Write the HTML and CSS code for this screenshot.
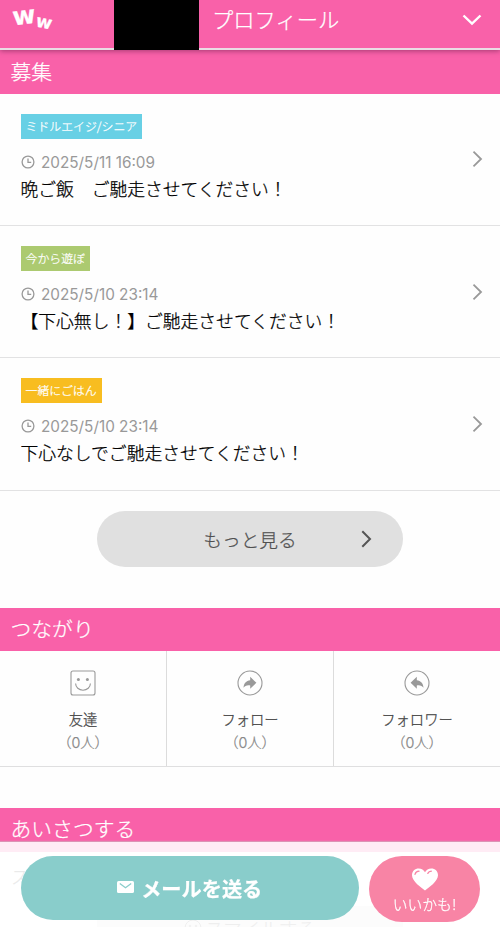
FILE: index.html
```html
<!DOCTYPE html>
<html lang="ja">
<head>
<meta charset="utf-8">
<title>プロフィール</title>
<link rel="stylesheet" href="styles.css">
</head>
<body>
<header class="topbar">
  <div class="logo"><span class="logo-big">w</span><span class="logo-small">w</span></div>
  <div class="name-mask"></div>
  <h1 class="topbar-title">プロフィール</h1>
  <svg class="topbar-toggle" width="20" height="12" viewBox="0 0 20 12"><path d="M1.5 1.5 10 9.6 18.5 1.5" fill="none" stroke="#fff" stroke-width="2.4"/></svg>
</header>
<main>
  <h2 class="section-title first">募集</h2>
  <ul class="posts">
    <li class="post">
      <div class="post-body">
        <span class="tag blue">ミドルエイジ/シニア</span>
        <div class="date"><svg width="14" height="14" viewBox="0 0 14 14"><circle cx="7" cy="7" r="5.9"/><path d="M7 3.6V7.4H10.2"/></svg><time>2025/5/11 16:09</time></div>
        <p class="post-title">晩ご飯　ご馳走させてください！</p>
      </div>
      <svg class="chevron" width="11" height="18" viewBox="0 0 11 18"><path d="M1.5 1.7 9 9 1.5 16.3"/></svg>
    </li>
    <li class="post">
      <div class="post-body">
        <span class="tag green">今から遊ぼ</span>
        <div class="date"><svg width="14" height="14" viewBox="0 0 14 14"><circle cx="7" cy="7" r="5.9"/><path d="M7 3.6V7.4H10.2"/></svg><time>2025/5/10 23:14</time></div>
        <p class="post-title">【下心無し！】ご馳走させてください！</p>
      </div>
      <svg class="chevron" width="11" height="18" viewBox="0 0 11 18"><path d="M1.5 1.7 9 9 1.5 16.3"/></svg>
    </li>
    <li class="post">
      <div class="post-body">
        <span class="tag yellow">一緒にごはん</span>
        <div class="date"><svg width="14" height="14" viewBox="0 0 14 14"><circle cx="7" cy="7" r="5.9"/><path d="M7 3.6V7.4H10.2"/></svg><time>2025/5/10 23:14</time></div>
        <p class="post-title">下心なしでご馳走させてください！</p>
      </div>
      <svg class="chevron" width="11" height="18" viewBox="0 0 11 18"><path d="M1.5 1.7 9 9 1.5 16.3"/></svg>
    </li>
  </ul>
  <a class="more"><span>もっと見る</span><svg class="more-arrow" width="11" height="18" viewBox="0 0 11 18"><path d="M1.3 1.3 9 9 1.3 16.7"/></svg></a>

  <h2 class="section-title">つながり</h2>
  <div class="links">
    <div class="link">
      <svg width="26" height="26" viewBox="0 0 26 26"><rect x="1" y="1" width="24" height="24" rx="2" class="line"/><circle cx="8.4" cy="9.6" r="1.5" class="solid"/><circle cx="17.4" cy="9.6" r="1.5" class="solid"/><path d="M5.6 13.6a7.4 6.6 0 0 0 14.8 0" class="line"/></svg>
      <span class="link-name">友達</span><span class="link-count">（0人）</span>
    </div>
    <div class="link">
      <svg width="26" height="26" viewBox="0 0 26 26"><circle cx="13" cy="13" r="12" class="line"/><path class="solid" d="M13.2 6.8 19.4 12.8 13.2 18.8V15.4C9.8 15 7.8 15.8 6.5 17.8 6.8 13.4 9.2 10.7 13.2 10.3Z"/></svg>
      <span class="link-name">フォロー</span><span class="link-count">（0人）</span>
    </div>
    <div class="link">
      <svg width="26" height="26" viewBox="0 0 26 26"><circle cx="13" cy="13" r="12" class="line"/><path class="solid" d="M12.8 6.8 6.6 12.8 12.8 18.8V15.4C16.2 15 18.2 15.8 19.5 17.8 19.2 13.4 16.8 10.7 12.8 10.3Z"/></svg>
      <span class="link-name">フォロワー</span><span class="link-count">（0人）</span>
    </div>
  </div>

  <h2 class="section-title greet">あいさつする</h2>
  <p class="greet-lead">ス</p>
  <div class="greet-button"><svg width="18" height="18" viewBox="0 0 18 18"><circle cx="9" cy="9" r="8"/><circle cx="6" cy="7" r=".8"/><circle cx="12" cy="7" r=".8"/></svg><span>スマイルする</span></div>
</main>
<footer class="actions">
  <a class="mail">
    <svg width="17" height="12" viewBox="0 0 17 12"><rect width="17" height="12" rx="1.6" fill="#fff"/><path d="M2.8 2.6 8.5 6.8 14.2 2.6" fill="none" stroke="#89cdcb" stroke-width="1.3"/></svg>
    <span>メールを送る</span>
  </a>
  <a class="like">
    <svg width="26" height="23" viewBox="0 0 26 23"><path fill="#fff" d="M13 22.5C9.5 19.6 0 13.4 0 7.2 0 3 3 .4 6.7.4 9.5.4 11.8 1.8 13 4.2 14.2 1.8 16.5.4 19.3.4 23 .4 26 3 26 7.2 26 13.4 16.5 19.6 13 22.5Z"/><path d="M3 6.3C3.5 4.4 5 3.3 7 3.2M15.8 5.4C16.5 4 17.7 3.3 19.3 3.2" fill="none" stroke="#f884a5" stroke-width="1.3" stroke-linecap="round"/></svg>
    <span>いいかも!</span>
  </a>
</footer>
</body>
</html>
```
FILE: styles.css
```css
* { box-sizing: border-box; }
body {
  margin: 0;
  height: 927px;
  overflow: hidden;
  background: #fefefe;
  font-family: "Noto Sans CJK JP", sans-serif;
  font-weight: 300;
  -webkit-text-stroke: .25px currentColor;
  color: #111;
}
h1, h2, p, ul { margin: 0; padding: 0; font-weight: inherit; list-style: none; }

.topbar {
  position: relative;
  z-index: 1;
  display: flex;
  align-items: flex-start;
  height: 50px;
  background: #f961a9;
  border-bottom: 2.5px solid #eadde4;
  box-shadow: 0 1px 5px rgba(80, 20, 60, .5);
  color: #fff;
}
.logo { width: 114px; height: 40px; padding-left: 13px; display: flex; font: 700 25px/1 "DejaVu Sans", sans-serif; }
.logo span { display: block; }
.logo-big { margin-top: 3px; transform: rotate(-7deg); }
.logo-small { font-size: 17.5px; margin: 14px 0 0 -1px; transform: rotate(12deg); }
.name-mask { width: 85px; height: 50px; background: #000; }
.topbar-title { flex: 1; padding-left: 13px; font-size: 21.3px; line-height: 38px; }
.topbar-toggle { margin: 14px 18px 0 0; }

.section-title {
  height: 43.5px;
  padding-left: 10.5px;
  background: #f961a9;
  color: #fff;
  font-size: 20.8px;
  line-height: 40px;
}
.section-title.first { line-height: 42px; }

.post {
  display: flex;
  align-items: center;
  height: 132.4px;
  padding: 0 17px 0 20.5px;
  border-bottom: 1.5px solid #e2e2e3;
}
.post-body { flex: 1; height: 91px; }
.tag { display: block; width: max-content; height: 25px; padding: 0 5px; color: #fff; font-size: 11.9px; line-height: 23px; }
.blue { background: #68d0e5; }
.green { background: #acca70; }
.yellow { background: #f8bd20; }
.date { display: flex; align-items: center; height: 20px; margin-top: 14px; gap: 6px; padding-left: .5px; color: #999; font: 400 15.3px/20px Inter, sans-serif; -webkit-text-stroke: 0; }
.date svg { fill: none; stroke: #999; stroke-width: 1.3; margin-top: -2px; }
.post-title { font-size: 17.8px; line-height: 26px; margin-top: 2px; color: #000; white-space: nowrap; text-spacing-trim: space-all; }
.chevron { fill: none; stroke: #999; stroke-width: 1.8; }

.more {
  display: flex;
  justify-content: center;
  align-items: center;
  position: relative;
  width: 306px;
  height: 56px;
  margin: 20.5px auto 40.7px;
  padding-bottom: 2px;
  border-radius: 28px;
  background: #e0e0e0;
  color: #505050;
  font-size: 18.7px;
}
.more-arrow { position: absolute; top: 19px; right: 31px; fill: none; stroke: #555; stroke-width: 2; }

.links { display: grid; grid-template-columns: 167px 167px 166px; height: 116px; border-bottom: 1.5px solid #dfdfe0; }
.link { display: flex; flex-direction: column; align-items: center; padding-top: 19px; font-size: 14.3px; line-height: 24px; border-right: 1px solid #dcdcdc; }
.link:last-child { border-right: 0; }
.link-name { margin-top: 11px; color: #444; }
.link-count { color: #888; font-family: Inter, "Noto Sans CJK JP", sans-serif; text-spacing-trim: space-all; }
.line { fill: none; stroke: #999; stroke-width: 1.1; }
.solid { fill: #999; }

.greet { margin-top: 41px; }
.greet-lead { height: 54px; padding: 9px 11px 0; font-size: 18px; line-height: 30px; color: #555; }
.greet-button { display: flex; align-items: center; justify-content: center; gap: 3px; width: 306px; height: 44px; margin: 0 auto; background: #e6e6e6; color: #777; font-size: 18.5px; }
.greet-button svg { fill: none; stroke: #777; }

.actions {
  position: fixed;
  inset: 842px 0 0;
  display: flex;
  align-items: flex-start;
  gap: 10px;
  padding: 14px 20px 0 20.5px;
  background: rgba(255, 255, 255, .88);
  box-shadow: 0 -1px 1px rgba(200, 180, 190, .6);
}
.mail { display: flex; align-items: center; justify-content: center; gap: 7px; width: 338.5px; height: 64px; border-radius: 32px; background: #89cdcb; color: #fff; font-size: 20.2px; font-weight: 700; }
.mail svg { margin-top: -2px; }
.like { display: flex; flex-direction: column; align-items: center; width: 111px; height: 66px; padding-top: 12px; border-radius: 33px; background: #f884a5; color: #fff; font-size: 14.8px; line-height: 26px; }
.like svg { flex: none; }
```
